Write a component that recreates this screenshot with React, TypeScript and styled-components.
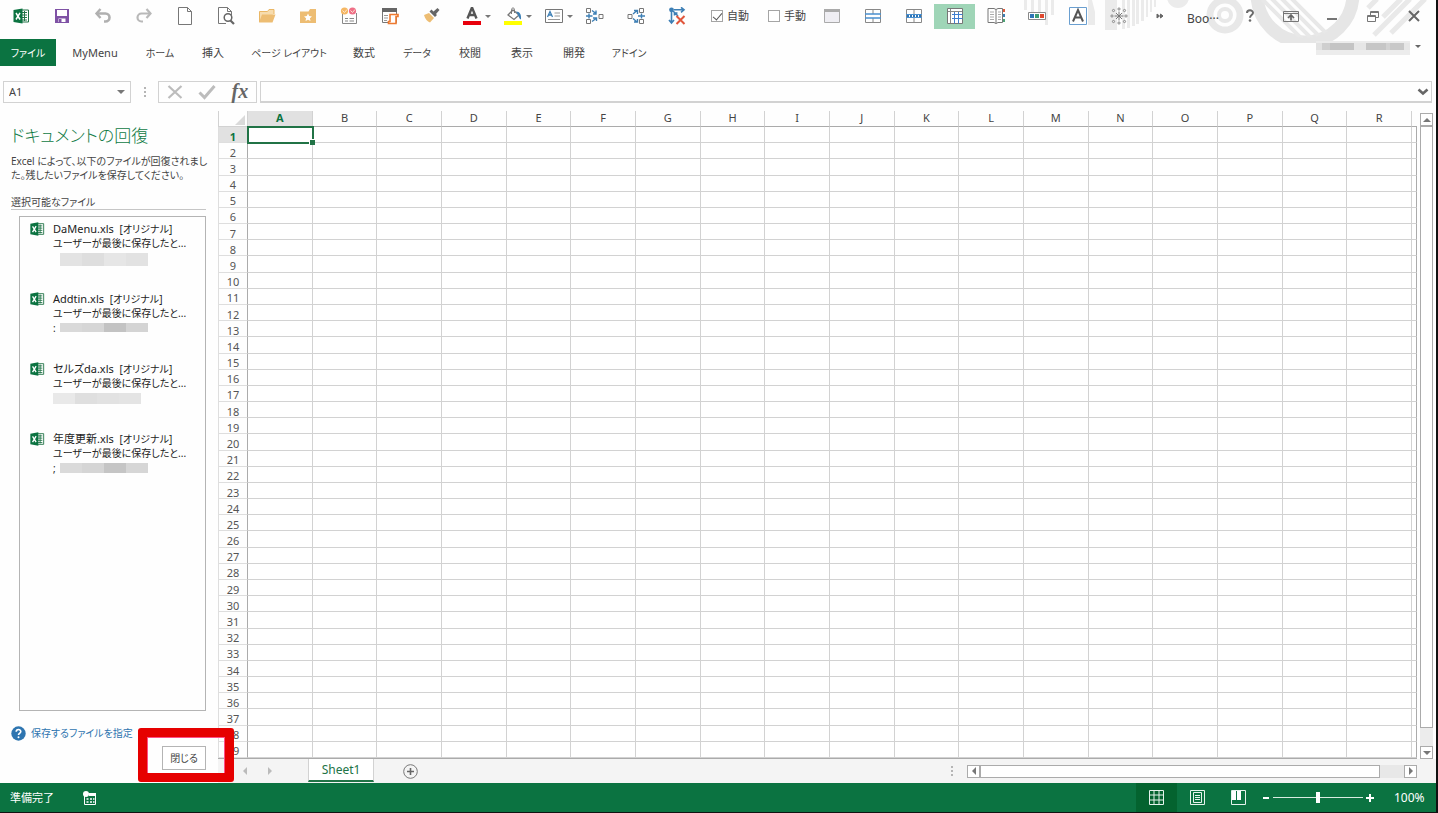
import React from "react";
import styled, { createGlobalStyle, css } from "styled-components";

const GREEN = "#0b7341";
const LINE = "#d2d2d2";
const EDGE = "#ababab";

const GlobalStyle = createGlobalStyle`
  * { box-sizing: border-box; }
  html, body { margin: 0; }
  body {
    font-family: "Noto Sans", "Noto Sans CJK JP", sans-serif;
    font-feature-settings: "palt";
    font-size: 11px;
    line-height: 14px;
    color: #444;
    background: #fefefe;
  }
  button, input { font: inherit; font-feature-settings: inherit; color: inherit; margin: 0; }
  button { border: 0; padding: 0; background: none; }
  svg { display: block; flex: none; }
`;

const Window = styled.div`
  display: flex;
  flex-direction: column;
  height: 100vh;
  overflow: hidden;
  position: relative;
  border-right: 2px solid #111;
  border-bottom: 1px solid #111;
`;

/* ---------- title bar ---------- */
const Decoration = styled.svg`
  position: absolute;
  top: 0;
  right: 0;
`;
const TitleBar = styled.header`
  position: relative;
  display: flex;
  align-items: center;
  justify-content: space-between;
  height: 32px;
  margin-bottom: 7px;
`;
const QuickAccess = styled.div`
  display: flex;
  align-items: center;
`;
const ToolButton = styled.button<{ $active?: boolean }>`
  position: relative;
  display: flex;
  align-items: center;
  justify-content: center;
  width: 41px;
  height: 25px;
  background: ${(p) => (p.$active ? "#9fd5b7" : "transparent")};
`;
const Caret = styled.span`
  position: absolute;
  right: 1px;
  top: 11px;
  border: 3px solid transparent;
  border-top-color: #777;
  border-bottom: 0;
`;
const CheckLabel = styled.label`
  display: flex;
  align-items: center;
  gap: 4px;
  width: 57px;
  padding-left: 14px;
`;
const CheckBox = styled.input`
  appearance: none;
  display: flex;
  justify-content: center;
  width: 12px;
  height: 12px;
  border: 1px solid #a5a5a5;
  background: #fff;
  &:checked::after {
    content: "";
    width: 4px;
    height: 8px;
    border: solid #555;
    border-width: 0 1px 1px 0;
    transform: rotate(40deg);
  }
`;
const WindowControls = styled.div`
  display: flex;
  align-items: center;
  padding-right: 2px;
`;
const BookName = styled.span`
  width: 42px;
  padding-top: 6px;
  font-size: 12px;
  white-space: nowrap;
`;

/* ---------- ribbon ---------- */
const RibbonRow = styled.div`
  position: relative;
  display: flex;
  justify-content: space-between;
  height: 27px;
  margin-bottom: 15px;
`;
const Tabs = styled.nav`
  display: flex;
`;
const Tab = styled.button<{ $width: number; $kana?: boolean; $file?: boolean }>`
  width: ${(p) => p.$width}px;
  font-size: ${(p) => (p.$kana ? 10 : 11)}px;
  white-space: nowrap;
  ${(p) =>
    p.$file &&
    css`
      background: ${GREEN};
      color: #fff;
    `}
`;
const Account = styled.button`
  display: flex;
  align-items: flex-start;
  gap: 5px;
  padding-right: 15px;
`;
const AccountName = styled.span`
  width: 94px;
  height: 14px;
  margin-top: 2px;
  background: linear-gradient(90deg, #e2e2e2 0 6px, #cfcfcf 6px 14px, #c4c4c4 14px 38px, #e6e6e6 38px 50px, #c6c6c6 50px 70px, #d2d2d2 70px 74px, #c8c8c8 74px 88px, #e6e6e6 88px);
  border: solid #ececec;
  border-width: 2px 0 5px;
`;
const AccountCaret = styled.span`
  margin-top: 6px;
  border: 3px solid transparent;
  border-top-color: #666;
  border-bottom: 0;
`;

/* ---------- formula bar ---------- */
const FormulaBar = styled.div`
  display: flex;
  height: 22px;
  padding: 0 4px 0 3px;
  margin-bottom: 8px;
`;
const NameBox = styled.div`
  display: flex;
  align-items: center;
  width: 128px;
  padding-right: 5px;
  border: 1px solid ${LINE};
`;
const NameInput = styled.input`
  flex: 1;
  min-width: 0;
  padding: 0 5px;
  border: 0;
  background: none;
`;
const DownMark = styled.span`
  border: 4px solid transparent;
  border-top-color: #777;
  border-bottom: 0;
`;
const Dots = styled.span<{ $width: number }>`
  display: flex;
  flex-direction: column;
  align-items: center;
  justify-content: center;
  gap: 2px;
  width: ${(p) => p.$width}px;
  i {
    width: 2px;
    height: 2px;
    background: #b5b5b5;
  }
`;
const FormulaButtons = styled.div`
  display: flex;
  align-items: center;
  justify-content: space-around;
  width: 99px;
  margin-right: 3px;
  border: 1px solid ${LINE};
`;
const FxButton = styled.button`
  padding-bottom: 2px;
  font-family: "Liberation Serif", serif;
  font-style: italic;
  font-weight: 700;
  font-size: 20px;
  line-height: 18px;
  color: #666;
`;
const FormulaField = styled.div`
  display: flex;
  align-items: center;
  flex: 1;
  padding-right: 2px;
  border: 1px solid ${LINE};
  border-bottom-width: 2px;
`;

/* ---------- workspace ---------- */
const Workspace = styled.main`
  display: flex;
  flex: 1;
  min-height: 0;
`;
const Pane = styled.aside`
  display: flex;
  flex-direction: column;
  width: 218px;
  padding: 14px 12px 13px 11px;
  font-size: 10px;
`;
const PaneTitle = styled.h1`
  margin: 0 0 7px;
  font-size: 17px;
  line-height: 22px;
  font-weight: 300;
  color: #0f7a44;
  white-space: nowrap;
`;
const PaneText = styled.p`
  margin: 0 0 14px;
  line-height: 14px;
  white-space: nowrap;
`;
const PaneHeading = styled.h2`
  margin: 0 0 6px;
  font-size: 10px;
  line-height: 13px;
  font-weight: 400;
  border-bottom: 1px solid #c6c6c6;
`;
const FileList = styled.ul`
  flex: 1;
  margin: 0 0 14px 8px;
  padding: 4px 0 0;
  list-style: none;
  border: 1px solid #b4b4b4;
`;
const FileItem = styled.li`
  display: flex;
  gap: 8px;
  height: 70px;
  padding-left: 9px;
  line-height: 15px;
  white-space: pre;
  color: #222;
`;
const FileName = styled.div`
  height: 15px;
  font-size: 11px;
  small { font-size: 10px; }
`;
const Redacted = styled.div<{ $height: number }>`
  display: flex;
  height: ${(p) => p.$height}px;
  margin-top: 2px;
  line-height: 10px;
`;
const Remnant = styled.span`
  width: 7px;
`;
const Mosaic = styled.span<{ $tone: string }>`
  width: 22px;
  background: ${(p) => p.$tone};
`;
const HelpLink = styled.a`
  display: flex;
  align-items: center;
  gap: 5px;
  height: 16px;
  margin-bottom: 5px;
  color: #2e75b0;
  text-decoration: none;
  white-space: nowrap;
`;
const CloseWrap = styled.div`
  position: relative;
  align-self: flex-end;
`;
const CloseButton = styled.button`
  display: block;
  width: 44px;
  height: 24px;
  border: 1px solid #b4b4b4;
  background: #fff;
`;
const Highlight = styled.div`
  position: absolute;
  z-index: 2;
  inset: -18px -28px -12px -24px;
  border: 9px solid #e60000;
  border-radius: 3px;
  box-shadow: inset 1px 1px 0 #ff4f86, inset -1px 0 0 #ff4f86;
  pointer-events: none;
`;

/* ---------- sheet ---------- */
const SheetArea = styled.section`
  display: flex;
  flex-direction: column;
  flex: 1;
  min-width: 0;
`;
const GridRow = styled.div`
  display: flex;
  flex: 1;
  min-height: 0;
  padding-right: 3px;
`;
const Grid = styled.table`
  display: grid;
  grid-template-columns: 30px repeat(18, 1fr) 5px;
  grid-template-rows: 16px repeat(39, minmax(0, 1fr));
  flex: 1;
  min-width: 0;
  border-bottom: 1px solid ${EDGE};
  thead, tbody, tr { display: contents; }
`;
const ColHead = styled.th<{ $selected?: boolean }>`
  padding: 0;
  font-weight: ${(p) => (p.$selected ? 700 : 400)};
  color: ${(p) => (p.$selected ? GREEN : "#444")};
  background: ${(p) => (p.$selected ? "#e1e1e1" : "transparent")};
  border-right: 1px solid ${LINE};
  border-bottom: 1px solid ${EDGE};
`;
const Corner = styled.td`
  display: flex;
  justify-content: flex-end;
  align-items: flex-end;
  padding: 0 2px 1px 0;
  border: solid ${LINE};
  border-width: 0 1px 1px 1px;
`;
const CornerMark = styled.i`
  border: 5px solid #dadada;
  border-top-color: transparent;
  border-left-color: transparent;
`;
const RowHead = styled.th<{ $selected?: boolean }>`
  display: flex;
  align-items: center;
  justify-content: center;
  padding: 4px 0 0;
  min-height: 0;
  line-height: 12px;
  font-weight: ${(p) => (p.$selected ? 700 : 400)};
  color: ${(p) => (p.$selected ? GREEN : "#555")};
  background: ${(p) => (p.$selected ? "#e1e1e1" : "transparent")};
  border: solid #dedede;
  border-width: 0 1px 1px 1px;
  border-right-color: ${EDGE};
`;
const Cell = styled.td`
  position: relative;
  padding: 0;
  background: #fff;
  border: solid ${LINE};
  border-width: 0 1px 1px 0;
  &:last-child { border-right-color: ${EDGE}; }
`;
const TopCell = styled.td`
  padding: 0;
  border-bottom: 1px solid ${EDGE};
`;
const Selection = styled.div`
  position: absolute;
  z-index: 1;
  inset: -1px -2px -2px -1px;
  border: 2px solid #217346;
  &::after {
    content: "";
    position: absolute;
    right: -3px;
    bottom: -3px;
    width: 5px;
    height: 5px;
    background: #217346;
    box-shadow: -1px -1px 0 #fff;
  }
`;
const VScroll = styled.div`
  display: flex;
  flex-direction: column;
  width: 13px;
  margin: 2px 0 0 3px;
  background: #ececec;
`;
const VThumb = styled.div`
  flex: 1;
  margin-bottom: 18px;
  background: #fff;
  border: 1px solid ${EDGE};
`;
const ArrowButton = styled.button`
  display: flex;
  align-items: center;
  justify-content: center;
  flex: none;
  width: 13px;
  height: 13px;
  background: #fff;
  border: 1px solid ${EDGE};
`;
const SheetBar = styled.div`
  display: flex;
  align-items: center;
  justify-content: space-between;
  height: 24px;
  padding-right: 19px;
  background: #f4f4f4;
`;
const SheetTabs = styled.div`
  display: flex;
  align-items: center;
  height: 24px;
  padding-left: 14px;
`;
const NavButton = styled.button`
  display: flex;
  justify-content: center;
  width: 25px;
`;
const SheetTab = styled.button`
  align-self: flex-start;
  width: 66px;
  height: 23px;
  margin: 0 24px 0 26px;
  font-size: 12px;
  color: #217346;
  background: #fff;
  border: solid ${LINE};
  border-width: 0 1px 2px 1px;
  border-bottom-color: #217346;
`;
const HScrollWrap = styled.div`
  display: flex;
  flex: none;
  width: 40%;
  max-width: 483px;
`;
const HScroll = styled.div`
  display: flex;
  flex: 1;
  background: #e8e8e8;
`;
const HThumb = styled.div`
  flex: 1;
  margin-right: 24px;
  background: #fff;
  border: 1px solid ${EDGE};
`;

/* ---------- status bar ---------- */
const StatusBar = styled.footer`
  display: flex;
  justify-content: space-between;
  flex: none;
  height: 29px;
  background: ${GREEN};
  color: #fff;
`;
const StatusGroup = styled.div`
  display: flex;
  align-items: center;
`;
const StatusText = styled.span`
  width: 82px;
  padding-left: 10px;
`;
const ViewButton = styled.button<{ $active?: boolean }>`
  display: flex;
  align-items: center;
  justify-content: center;
  width: 41px;
  height: 29px;
  background: ${(p) => (p.$active ? "#04632f" : "transparent")};
`;
const ZoomStep = styled.button`
  display: flex;
  justify-content: center;
  width: 14px;
`;
const ZoomSlider = styled.input`
  appearance: none;
  width: 90px;
  height: 12px;
  background: linear-gradient(#d9ece1, #d9ece1) center / 100% 1px no-repeat;
  &::-webkit-slider-thumb {
    appearance: none;
    width: 4px;
    height: 11px;
    background: #fff;
  }
`;
const ZoomValue = styled.span`
  width: 59px;
  padding-left: 17px;
  font-size: 12px;
`;

/* ---------- icons ---------- */
const Icon = ({ size = 18, children }: { size?: number; children: React.ReactNode }) => (
  <svg width={size} height={size} viewBox="0 0 18 18" fill="none" aria-hidden="true">
    {children}
  </svg>
);

const ExcelIcon = ({ size = 18 }: { size?: number }) => (
  <Icon size={size}>
    <path d="M9 3h7.5v12H9z" fill="#fff" stroke="#217346" />
    <path d="M10 5.5h5M10 8h5M10 10.500h5M10 13h5M12.500 4v10" stroke="#217346" />
    <path d="M1.500 3 10.500 1.500v15L1.500 15z" fill="#0b7341" />
    <path d="m4 6 4 6.500M8 5.800 4 12.500" stroke="#fff" strokeWidth="1.500" />
  </Icon>
);

const Glyphs: Record<string, React.ReactNode> = {
  save: (
    <>
      <path d="M2 2h14v14H2z" fill="#7f52a5" />
      <path d="M4 3h10v6H4zM5.500 11.500h7V15h-7z" fill="#fff" />
      <path d="M6 12h2.500v3H6z" fill="#7f52a5" />
    </>
  ),
  undo: (
    <>
      <path d="M3 6.500h8.500a4 4 0 0 1 0 8H10" stroke="#b0b0b0" strokeWidth="2.600" />
      <path d="M6.500 2 2.500 6.500 6.500 11" stroke="#b0b0b0" strokeWidth="2.400" />
    </>
  ),
  redo: (
    <>
      <path d="M15 6.500H6.500a4 4 0 0 0 0 8H8" stroke="#b9b9b9" strokeWidth="2.200" />
      <path d="m11.500 2 4 4.500-4 4.500" stroke="#b9b9b9" strokeWidth="2.200" />
    </>
  ),
  page: <path d="M2.500.500h9l4 4v13h-13zM11.500.500v4h4" fill="#fff" stroke="#777" />,
  preview: (
    <>
      <path d="M14.500 8V4.500l-4-4h-9v16H9M10.500.500v4h4" fill="#fff" stroke="#777" />
      <circle cx="11" cy="10.500" r="3.800" fill="#fff" stroke="#666" strokeWidth="1.500" />
      <path d="m13.500 13.500 3.500 3.500" stroke="#666" strokeWidth="2.200" />
    </>
  ),
  folder: (
    <>
      <path d="M1.500 15V4.500h8l1.500-2h5V7" fill="#f7dcae" stroke="#eab765" />
      <path d="M1 15.500 4 7.500h13.500l-3 8z" fill="#edbd73" />
    </>
  ),
  favorite: (
    <>
      <path d="M1 4.500h8.500L11 2h6v14H1z" fill="#edbd73" />
      <path d="m9 6.500 1.200 2.600 2.800.3-2.100 1.900.6 2.800L9 12.700l-2.500 1.400.6-2.800L5 9.400l2.800-.3z" fill="#fff" />
    </>
  ),
  contacts: (
    <>
      <path d="M2.500 6v10.500h14V6" stroke="#888" />
      <path d="M5 11.500h3M9.500 11.500H14M5 14h3M9.500 14H14" stroke="#888" />
      <circle cx="4.500" cy="4" r="3.600" fill="#f5b763" />
      <circle cx="12.500" cy="4" r="3.600" fill="#ef6f87" />
      <path d="m2.500 3.500 2 2 2.500-3M10.500 3.500l2 2 2.500-3" stroke="#fbe3d0" />
    </>
  ),
  form: (
    <>
      <path d="M1.500 1.500h14v14h-14z" fill="#fff" stroke="#777" />
      <path d="M1 1h15v4H1z" fill="#666" />
      <path d="M3 8.500h4M3 11h4M3 13.500h3" stroke="#999" />
      <path d="M9 7.500h8v2h-2v7H7.500v-2H9z" fill="#fff" stroke="#ee7a30" strokeWidth="1.600" />
    </>
  ),
  brush: (
    <>
      <path d="m2 8 5-2 5 5-4 4.500C5.500 14.500 3 12 2 8z" fill="#edbd73" />
      <path d="m7.500 4.500 2-2 5.500 5.500-2 2zM11.500 4.500 15.500 1l2 2L14 7z" fill="#666" />
    </>
  ),
  fontColor: (
    <>
      <path d="M4.500 11.500 9 .5l4.500 11M6 8h6" stroke="#555" strokeWidth="2.400" />
      <path d="M0 14h18v4H0z" fill="#e8000c" />
    </>
  ),
  fill: (
    <>
      <path d="m9 3 6 5-5 4.500L4 8z" fill="#fff" stroke="#777" strokeWidth="1.300" />
      <path d="M7.500 7V2.500c0-2 3-2 3 0V6" stroke="#777" />
      <path d="M12 4.500c4 0 5.500 3 5 8-2.500-1-2-4-5-8z" fill="#3d7fb5" />
      <path d="M0 14h18v4H0z" fill="#ff0" />
    </>
  ),
  textBox: (
    <>
      <path d="M.5 2.500h17v13H.5z" fill="#fff" stroke="#777" />
      <path d="M2.500 10 5 4.500 7.500 10M3.500 8h3" stroke="#3d7fb5" strokeWidth="1.300" />
      <path d="M9.500 6H15M9.500 9H15M3 12.500h12" stroke="#999" />
    </>
  ),
  group: (
    <>
      <path d="M.5 1.500h4v4h-4zM.5 12.500h4v4h-4zM13 7.500h4v4h-4z" stroke="#777" />
      <path d="M0 9h6.500M3 6.500v5M6 3.500l4 3M10 3.500V7H7M6 14.500l4-3M7 11h3.500v3" stroke="#3d7fb5" strokeWidth="1.400" />
    </>
  ),
  ungroup: (
    <>
      <path d="M12.500 1.500h4v4h-4zM12.500 12.500h4v4h-4zM1 7.500h4v4H1z" stroke="#777" />
      <path d="M11 9h7M14.500 6.500v5M6 7l4-3.500M7 3.500h3.500V7M6 11.500l4 3.500M7 15h3.500v-3" stroke="#3d7fb5" strokeWidth="1.400" />
    </>
  ),
  removeArrows: (
    <>
      <circle cx="3.500" cy="2.800" r="2.400" fill="#3d7fb5" />
      <path d="M3.500 3v13M1 13l2.500 3L6 13M6 2.800h10M13 .3l3 2.500-3 2.500M5 4l5 5M6.500 8.500V6h3" stroke="#3d7fb5" strokeWidth="1.600" />
      <path d="m8.500 9 8 8M16.500 9l-8 8" stroke="#e0563b" strokeWidth="2" />
    </>
  ),
  windowIcon: (
    <>
      <path d="M1.500 2.500h15v13h-15z" fill="#efeef3" stroke="#aaa" />
      <path d="M1 2h16v3H1z" fill="#aaa" />
    </>
  ),
  rows: (
    <>
      <path d="M1.500 2.500h15v13h-15zM9 2.500V7M9 11v4.500" fill="#fff" stroke="#888" />
      <path d="M1 7h16M1 11h16" stroke="#4a90d0" strokeWidth="1.400" />
    </>
  ),
  cells: (
    <>
      <path d="M1.500 2.500h15v13h-15zM9 2.500V7M9 11v4.500" fill="#fff" stroke="#888" />
      <path d="M1 7.500h16M1 10.500h16" stroke="#4a90d0" />
      <path d="M2 9h14" stroke="#2e75b6" strokeWidth="2" strokeDasharray="2 1" />
    </>
  ),
  gridView: (
    <>
      <path d="M1.500 1.500h15v15h-15z" fill="#fff" stroke="#777" />
      <path d="M2 4.500h14M4.500 2v14" stroke="#888" />
      <path d="M6 7.500h10.500M6 11.500h10.500M8.500 5v11.500M12.500 5v11.500" stroke="#3f7fd0" />
    </>
  ),
  book: (
    <>
      <path d="M1 1.500h6l2 1 2-1h4.500v14H11l-2 1-2-1H1zM9 2.500v14" fill="#fff" stroke="#777" />
      <path d="M3 5h4M3 7.500h4M3 10h4M3 12.500h4M11 5h3M11 7.500h3M11 10h3M11 12.500h3" stroke="#aaa" />
      <path d="M16 2h2v3h-2z" fill="#dd5a3a" />
      <path d="M16 7h2v3h-2z" fill="#3d7fb5" />
      <path d="M16 12h2v3h-2z" fill="#4da477" />
    </>
  ),
  palette: (
    <>
      <path d="M.5 5.500h17v7H.5z" fill="#fff" stroke="#888" />
      <path d="M2 7h4v4H2z" fill="#2e75b6" />
      <path d="M7 7h4v4H7z" fill="#3c9c74" />
      <path d="M12 7h4v4h-4z" fill="#e0482e" />
    </>
  ),
  letterBox: (
    <>
      <path d="M.5.5h17v17H.5z" fill="#fff" stroke="#6a9fd0" />
      <path d="M4 14.500 9 3l5 11.500M6 10.500h6" stroke="#555" strokeWidth="2" />
    </>
  ),
  burst: (
    <>
      <path d="M9 4.500v9M4.500 9h9M6 6l6 6M12 6l-6 6" stroke="#777" />
      <g stroke="#888">
        <circle cx="9" cy="2" r="1.100" /><circle cx="9" cy="16" r="1.100" />
        <circle cx="2" cy="9" r="1.100" /><circle cx="16" cy="9" r="1.100" />
        <circle cx="3.500" cy="3.500" r="1.100" /><circle cx="14.500" cy="3.500" r="1.100" />
        <circle cx="3.500" cy="14.500" r="1.100" /><circle cx="14.500" cy="14.500" r="1.100" />
      </g>
    </>
  ),
  more: <path d="m6 7 2.500 2L6 11zM9.500 7 12 9l-2.500 2z" fill="#666" stroke="#666" />,
  help: (
    <>
      <path d="M6 6c0-3.500 6-3.500 6-.2 0 2.400-3 2.200-3 5" stroke="#6b6b6b" strokeWidth="2" />
      <circle cx="9" cy="13.500" r="1.300" fill="#6b6b6b" />
    </>
  ),
  ribbonOptions: (
    <>
      <path d="M1.500 4.500h15v10h-15zM1.500 6.500h15" stroke="#777" />
      <path d="M9 13.500V8M6 11l3-3 3 3" stroke="#666" strokeWidth="1.700" />
    </>
  ),
  minimize: <path d="M4 12h10" stroke="#666" strokeWidth="1.800" />,
  restore: (
    <>
      <path d="M3.500 8.500h8v6h-8zM3.500 9.500h8" stroke="#777" />
      <path d="M6.500 8V4.500h8v6H12M6.500 5.500h8" stroke="#777" />
    </>
  ),
  close: <path d="m4 4 10 10M14 4 4 14" stroke="#666" strokeWidth="2" />,
};

const Decor = () => (
  <Decoration width="413" height="60" viewBox="1023 0 413 60" fill="none" aria-hidden="true">
    <defs>
      <clipPath id="disc"><circle cx="1305" cy="-6" r="44" /></clipPath>
      <clipPath id="band"><path d="M1240 0h130v43h-130z" /></clipPath>
    </defs>
    <g fill="#ebebeb">
      <path d="M1024 0h3v10h-3zM1031 0h3v14h-3zM1038 0h3v14h-3zM1045 0h3v25h-3zM1051 0h3v15h-3z" />
      <path d="M1088 0h4l3 12v13h-7zM1105 0h12v30h-12zM1122 0h3v29h-3zM1127 0h3v28h-3zM1132 0h3v26h-3zM1136 0h3v24h-3zM1141 0h3v21h-3zM1146 0h2v17h-2zM1150 0h2v12h-2zM1154 0h2v7h-2z" />
      <circle cx="1178" cy="-3" r="11" />
    </g>
    <circle cx="1225" cy="15" r="15" stroke="#e8e8e8" strokeWidth="7" />
    <circle cx="1225" cy="15" r="6" stroke="#e8e8e8" strokeWidth="4" />
    <g clipPath="url(#band)">
      <circle cx="1305" cy="-6" r="48" stroke="#e6e6e6" strokeWidth="13" />
      <g clipPath="url(#disc)" stroke="#e8e8e8" strokeWidth="4">
        <path d="m1258-5 50 50M1268-5l50 50M1278-5l50 50M1288-5l50 50" />
      </g>
    </g>
    <path d="m1374 35 36-36M1391 33l34-34M1383 17l18-18M1368 8l9-9" stroke="#e9e9e9" strokeWidth="5" />
  </Decoration>
);

type Tool = { id: string; label: string; caret?: boolean; active?: boolean };
const toolsLeft: Tool[] = [
  { id: "save", label: "上書き保存" },
  { id: "undo", label: "元に戻す" },
  { id: "redo", label: "やり直し" },
  { id: "page", label: "新規作成" },
  { id: "preview", label: "印刷プレビュー" },
  { id: "folder", label: "開く" },
  { id: "favorite", label: "お気に入り" },
  { id: "contacts", label: "連絡先" },
  { id: "form", label: "フォーム" },
  { id: "brush", label: "書式のコピー" },
  { id: "fontColor", label: "フォントの色", caret: true },
  { id: "fill", label: "塗りつぶし", caret: true },
  { id: "textBox", label: "テキスト ボックス", caret: true },
  { id: "group", label: "参照元のトレース" },
  { id: "ungroup", label: "参照先のトレース" },
  { id: "removeArrows", label: "トレース矢印の削除" },
];
const toolsRight: Tool[] = [
  { id: "windowIcon", label: "ウィンドウ" },
  { id: "rows", label: "行" },
  { id: "cells", label: "セル" },
  { id: "gridView", label: "枠線", active: true },
  { id: "book", label: "リサーチ" },
  { id: "palette", label: "配色" },
  { id: "letterBox", label: "文字" },
  { id: "burst", label: "図形" },
  { id: "more", label: "その他" },
];
const windowTools: Tool[] = [
  { id: "help", label: "ヘルプ" },
  { id: "ribbonOptions", label: "リボンの表示オプション" },
  { id: "minimize", label: "最小化" },
  { id: "restore", label: "元に戻す (縮小)" },
  { id: "close", label: "ウィンドウを閉じる" },
];
const tabs: { name: string; width: number; kana?: boolean }[] = [
  { name: "MyMenu", width: 78 },
  { name: "ホーム", width: 52, kana: true },
  { name: "挿入", width: 54 },
  { name: "ページ レイアウト", width: 98, kana: true },
  { name: "数式", width: 52 },
  { name: "データ", width: 54, kana: true },
  { name: "校閲", width: 52 },
  { name: "表示", width: 52 },
  { name: "開発", width: 52 },
  { name: "アドイン", width: 58, kana: true },
];
const files = [
  { name: "DaMenu.xls", height: 13, lead: " ", tones: ["#e3e3e3", "#dedede", "#e6e6e6", "#e2e2e2"] },
  { name: "Addtin.xls", height: 9, lead: ":", tones: ["#d9d9d9", "#d6d6d6", "#c3c3c3", "#d4d4d4"] },
  { name: "セルズda.xls", height: 11, lead: "", tones: ["#e9e9e9", "#dfdfdf", "#e2e2e2", "#e4e4e4"] },
  { name: "年度更新.xls", height: 10, lead: ";", tones: ["#dadada", "#d5d5d5", "#c5c5c5", "#d6d6d6"] },
];
const columns = "ABCDEFGHIJKLMNOPQR".split("");
const rows = Array.from({ length: 39 }, (_, i) => i + 1);

const Tools = ({ items }: { items: Tool[] }) => (
  <>
    {items.map((t) => (
      <ToolButton key={t.id} $active={t.active} aria-label={t.label}>
        <Icon>{Glyphs[t.id]}</Icon>
        {t.caret && <Caret />}
      </ToolButton>
    ))}
  </>
);

const Arrow = ({ d, fill = "#777" }: { d: string; fill?: string }) => (
  <svg width="8" height="8" viewBox="0 0 8 8" aria-hidden="true">
    <path d={d} fill={fill} />
  </svg>
);
const LEFT = "M6 0v8L2 4z";
const RIGHT = "M2 0v8l4-4z";

export default function App() {
  return (
    <Window>
      <GlobalStyle />
      <Decor />
      <TitleBar>
        <QuickAccess>
          <ToolButton as="span"><ExcelIcon /></ToolButton>
          <Tools items={toolsLeft} />
          <CheckLabel><CheckBox type="checkbox" defaultChecked />自動</CheckLabel>
          <CheckLabel><CheckBox type="checkbox" />手動</CheckLabel>
          <Tools items={toolsRight} />
        </QuickAccess>
        <WindowControls>
          <BookName>Boo···</BookName>
          <Tools items={windowTools} />
        </WindowControls>
      </TitleBar>

      <RibbonRow>
        <Tabs>
          <Tab $width={56} $file $kana>ファイル</Tab>
          {tabs.map((t) => (
            <Tab key={t.name} $width={t.width} $kana={t.kana}>{t.name}</Tab>
          ))}
        </Tabs>
        <Account aria-label="アカウント"><AccountName /><AccountCaret /></Account>
      </RibbonRow>

      <FormulaBar>
        <NameBox>
          <NameInput aria-label="名前ボックス" defaultValue="A1" />
          <DownMark />
        </NameBox>
        <Dots $width={27}><i /><i /><i /></Dots>
        <FormulaButtons>
          <button aria-label="キャンセル">
            <svg width="16" height="16" viewBox="0 0 16 16" fill="none"><path d="m1.500 2 13 12M14.500 2l-13 12" stroke="#bcbcbc" strokeWidth="2.200" /></svg>
          </button>
          <button aria-label="入力">
            <svg width="18" height="16" viewBox="0 0 18 16" fill="none"><path d="m1.500 8.500 5 5L16.500 2" stroke="#bcbcbc" strokeWidth="3" /></svg>
          </button>
          <FxButton aria-label="関数の挿入">fx</FxButton>
        </FormulaButtons>
        <FormulaField>
          <NameInput aria-label="数式バー" />
          <button aria-label="数式バーの展開">
            <svg width="12" height="8" viewBox="0 0 12 8" fill="none"><path d="m1.500 1.500 4.500 4 4.500-4" stroke="#666" strokeWidth="2.600" /></svg>
          </button>
        </FormulaField>
      </FormulaBar>

      <Workspace>
        <Pane>
          <PaneTitle>ドキュメントの回復</PaneTitle>
          <PaneText>
            Excel によって、以下のファイルが回復されまし<br />た。残したいファイルを保存してください。
          </PaneText>
          <PaneHeading>選択可能なファイル</PaneHeading>
          <FileList>
            {files.map((f) => (
              <FileItem key={f.name}>
                <ExcelIcon size={16} />
                <div>
                  <FileName>{f.name}  <small>[オリジナル]</small></FileName>
                  <div>ユーザーが最後に保存したと...</div>
                  <Redacted $height={f.height}>
                    {f.lead && <Remnant>{f.lead}</Remnant>}
                    {f.tones.map((tone) => <Mosaic key={tone} $tone={tone} />)}
                  </Redacted>
                </div>
              </FileItem>
            ))}
          </FileList>
          <HelpLink href="#save">
            <svg width="15" height="15" viewBox="0 0 15 15" fill="none" aria-hidden="true">
              <circle cx="7.500" cy="7.500" r="7.200" fill="#2e75b0" />
              <path d="M5.200 5.800c0-3 4.600-3 4.600-.2 0 1.800-2.300 1.800-2.300 3.400" stroke="#fff" strokeWidth="1.600" />
              <circle cx="7.500" cy="11.300" r="1" fill="#fff" />
            </svg>
            保存するファイルを指定
          </HelpLink>
          <CloseWrap>
            <CloseButton>閉じる</CloseButton>
            <Highlight />
          </CloseWrap>
        </Pane>

        <SheetArea>
          <GridRow>
            <Grid>
              <thead>
                <tr>
                  <Corner><CornerMark /></Corner>
                  {columns.map((c) => <ColHead key={c} scope="col" $selected={c === "A"}>{c}</ColHead>)}
                  <TopCell />
                </tr>
              </thead>
              <tbody>
                {rows.map((r) => (
                  <tr key={r}>
                    <RowHead scope="row" $selected={r === 1}>{r}</RowHead>
                    {columns.map((c) => <Cell key={c}>{r === 1 && c === "A" && <Selection />}</Cell>)}
                    <Cell />
                  </tr>
                ))}
              </tbody>
            </Grid>
            <VScroll>
              <ArrowButton aria-label="上へ"><Arrow d="M0 6h8L4 2z" /></ArrowButton>
              <VThumb />
              <ArrowButton aria-label="下へ"><Arrow d="M0 2h8L4 6z" /></ArrowButton>
            </VScroll>
          </GridRow>
          <SheetBar>
            <SheetTabs>
              <NavButton aria-label="前のシート"><Arrow d={LEFT} fill="#bbb" /></NavButton>
              <NavButton aria-label="次のシート"><Arrow d={RIGHT} fill="#bbb" /></NavButton>
              <SheetTab>Sheet1</SheetTab>
              <NavButton aria-label="新しいシート">
                <svg width="15" height="15" viewBox="0 0 15 15" fill="none">
                  <circle cx="7.500" cy="7.500" r="6.800" stroke="#777" />
                  <path d="M7.500 4v7M4 7.500h7" stroke="#666" strokeWidth="1.600" />
                </svg>
              </NavButton>
            </SheetTabs>
            <HScrollWrap>
              <Dots $width={30}><i /><i /><i /></Dots>
              <HScroll>
                <ArrowButton aria-label="左へ"><Arrow d={LEFT} /></ArrowButton>
                <HThumb />
                <ArrowButton aria-label="右へ"><Arrow d={RIGHT} /></ArrowButton>
              </HScroll>
            </HScrollWrap>
          </SheetBar>
        </SheetArea>
      </Workspace>

      <StatusBar>
        <StatusGroup>
          <StatusText>準備完了</StatusText>
          <svg width="16" height="16" viewBox="0 0 16 16" fill="none" aria-hidden="true">
            <path d="M2.500 5v9.500h11V3.500H7" stroke="#fff" />
            <path d="M7 3h7v3H7z" fill="#fff" />
            <circle cx="4" cy="4" r="3" fill="#fff" />
            <path d="M4.500 9h2M8 9h2M11 9h1.500M4.500 12h2M8 12h2M11 12h1.500" stroke="#fff" strokeWidth="1.400" />
          </svg>
        </StatusGroup>
        <StatusGroup>
          <ViewButton $active aria-label="標準">
            <svg width="15" height="15" viewBox="0 0 15 15" fill="none"><path d="M.5.5h14v14H.5zM.5 5h14M.5 10h14M5 .5v14M10 .5v14" stroke="#e6f3ec" /></svg>
          </ViewButton>
          <ViewButton aria-label="ページ レイアウト表示">
            <svg width="15" height="15" viewBox="0 0 15 15" fill="none"><path d="M.5.500h14v14H.5zM3.500 2.500h8v10h-8zM5 5.500h5M5 7.500h5M5 9.500h5" stroke="#e6f3ec" /></svg>
          </ViewButton>
          <ViewButton aria-label="改ページ プレビュー">
            <svg width="15" height="15" viewBox="0 0 15 15" fill="none"><path d="M.5.500h14v14H.5z" stroke="#e6f3ec" /><path d="M1 1h4v9H1zM6 1h4v9H6z" fill="#fff" /></svg>
          </ViewButton>
          <ZoomStep aria-label="縮小"><svg width="8" height="8" viewBox="0 0 8 8"><path d="M1 3h6v2H1z" fill="#fff" /></svg></ZoomStep>
          <ZoomSlider type="range" aria-label="ズーム" min={0} max={200} defaultValue={100} />
          <ZoomStep aria-label="拡大"><svg width="8" height="8" viewBox="0 0 8 8"><path d="M0 3h3V0h2v3h3v2H5v3H3V5H0z" fill="#fff" /></svg></ZoomStep>
          <ZoomValue>100%</ZoomValue>
        </StatusGroup>
      </StatusBar>
    </Window>
  );
}
